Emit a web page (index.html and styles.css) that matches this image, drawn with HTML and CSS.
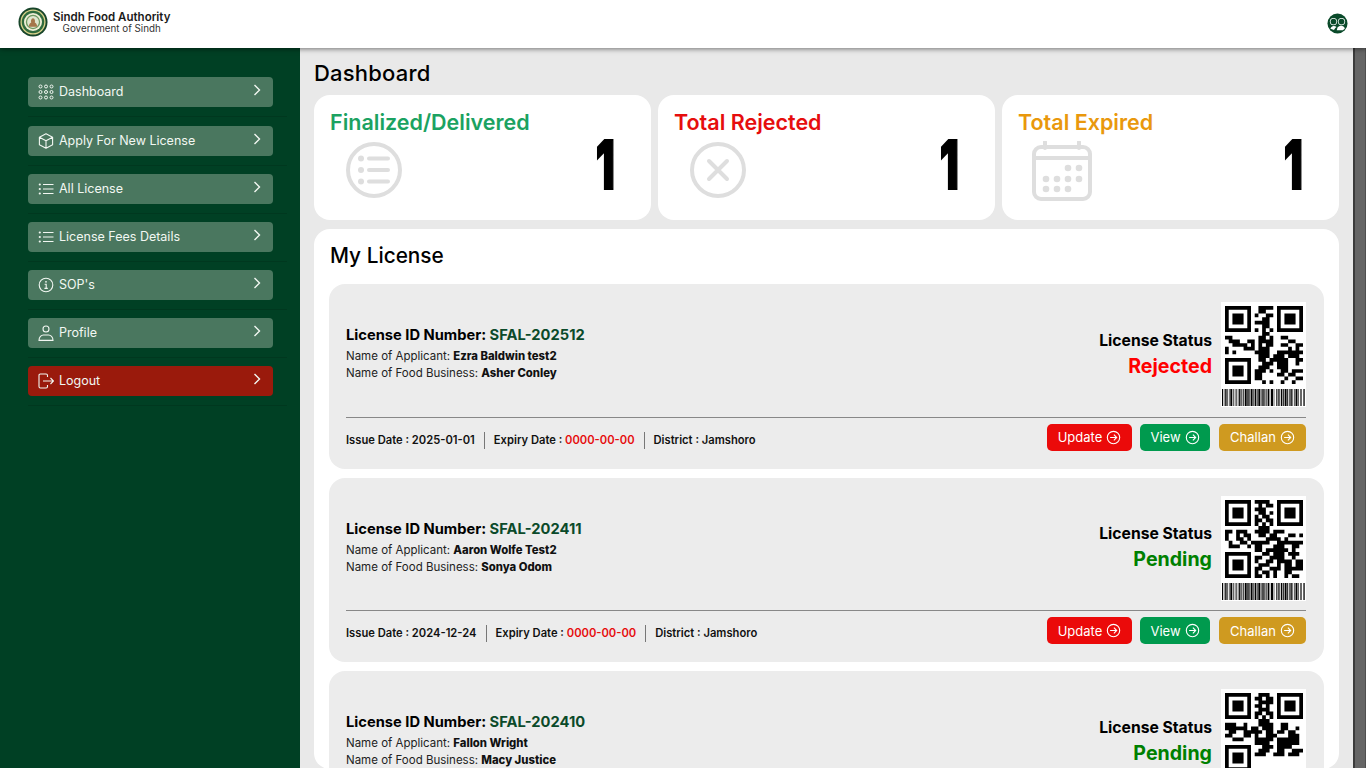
FILE: index.html
```html
<!DOCTYPE html>
<html lang="en">
<head>
<meta charset="utf-8">
<title>Sindh Food Authority</title>
<link rel="stylesheet" href="styles.css">
</head>
<body>
<svg class="sprite" aria-hidden="true">
  <symbol id="chev" viewBox="0 0 8 12"><path d="M1.5 1l5 5-5 5" fill="none" stroke="currentColor" stroke-width="1.4"/></symbol>
  <symbol id="go" viewBox="0 0 16 16"><g fill="none" stroke="currentColor" stroke-width="1.2"><circle cx="8" cy="8" r="6.6"/><path d="M4.4 8h7M8.4 5l3 3-3 3"/></g></symbol>
  <symbol id="list" viewBox="0 0 16 16"><g fill="none" stroke="currentColor" stroke-width="1.1"><path d="M5 3.5h10.5M5 8h10.5M5 12.5h10.5"/></g><g fill="currentColor"><circle cx="1.8" cy="3.5" r="1.1"/><circle cx="1.8" cy="8" r="1.1"/><circle cx="1.8" cy="12.5" r="1.1"/></g></symbol>
  <symbol id="bars" viewBox="0 0 83 17"><path d="M0 8.5h83" fill="none" stroke="#000" stroke-width="17" stroke-dasharray="1 .8 .6 .8 1.4 .7 .6 1 .6 .8 2 .7 .6 1.2 .6 .8 .6 1 .6 .7 1.4 .8 .6 .8 1 1 2 .6 1.4 .6 .6 .7 2 .6 .6 .8 1.4 .6 1 .7 2 .6 .6 .8 1.4 .7 1 .6 .6 1 1.4 .6 .6 .8 2 .7 .6 2 .8 .6 1 .7 .6 .8 1.4 .6 1 .8 2 .6"/></symbol>
  <symbol id="finders" viewBox="0 0 21 21"><path fill-rule="evenodd" d="M0 0h7v7H0zM1 1v5h5V1zM2 2h3v3H2zM14 0h7v7h-7zM15 1v5h5V1zM16 2h3v3h-3zM0 14h7v7H0zM1 15v5h5v-5zM2 16h3v3H2z"/></symbol>
</svg>

<header class="topbar">
  <div class="brand">
    <svg class="logo" viewBox="0 0 32 32" aria-hidden="true">
      <circle cx="16" cy="16" r="15.5" fill="#17452a"/>
      <circle cx="16" cy="16" r="13.4" fill="#d9d28a"/>
      <circle cx="16" cy="16" r="12" fill="#2f6b3d"/>
      <circle cx="16" cy="16" r="9.6" fill="#f1efd8"/>
      <circle cx="16" cy="16" r="7" fill="#dfe6cf" stroke="#6f9a63" stroke-width="1.4"/>
      <path d="M11.5 21c.3-3 1.4-4 2.6-4.6-.6-1.5-.2-4 1.9-4.4 2.1.4 2.5 2.9 1.9 4.4 1.2.6 2.3 1.6 2.6 4.6z" fill="#a5764a"/>
    </svg>
    <div class="brand-text">
      <div class="brand-name">Sindh Food Authority</div>
      <div class="brand-sub">Government of Sindh</div>
    </div>
  </div>
  <svg class="user-icon" viewBox="0 0 22 22" aria-hidden="true">
    <circle cx="11" cy="11" r="10.5" fill="#0a4a2a"/>
    <circle cx="6.800" cy="9" r="3.800" fill="#fff"/>
    <circle cx="15.200" cy="9" r="3.800" fill="#fff"/>
    <circle cx="6.800" cy="9" r="3" fill="#0a4a2a"/>
    <circle cx="15.200" cy="9" r="3" fill="#0a4a2a"/>
    <path d="M3.600 16.500c.6-2 2-3 3.400-3 1.200 0 2.200.4 3 1.200-1 .8-2 1.600-2.600 3.200z" fill="#fff"/>
    <path d="M11 15.200c1-1.200 2.400-1.800 4-1.800 1.700 0 3 .9 3.700 2.800l-2 2H10.200z" fill="#fff"/>
  </svg>
</header>

<div class="shell">
  <aside class="sidebar">
    <ul class="nav">
      <li class="nav-item first"><a class="nav-link">
        <svg class="nav-icon" viewBox="0 0 16 16"><g fill="none" stroke="currentColor" stroke-width="1"><circle cx="2.5" cy="2.500" r="1.500"/><circle cx="8" cy="2.500" r="1.500"/><circle cx="13.500" cy="2.500" r="1.500"/><circle cx="2.500" cy="8" r="1.500"/><circle cx="8" cy="8" r="1.500"/><circle cx="13.500" cy="8" r="1.500"/><circle cx="2.500" cy="13.500" r="1.500"/><circle cx="8" cy="13.500" r="1.500"/><circle cx="13.500" cy="13.500" r="1.500"/></g></svg>
        <span class="nav-label">Dashboard</span><svg class="nav-chev"><use href="#chev"/></svg></a></li>
      <li class="nav-item"><a class="nav-link">
        <svg class="nav-icon" viewBox="0 0 16 16"><path d="M8 .8l6.600 3.400v7.600L8 15.200l-6.600-3.400V4.200zM1.400 4.200L8 7.800l6.600-3.600M8 7.800v7.400" fill="none" stroke="currentColor" stroke-width="1.100" stroke-linejoin="round"/></svg>
        <span class="nav-label">Apply For New License</span><svg class="nav-chev"><use href="#chev"/></svg></a></li>
      <li class="nav-item"><a class="nav-link">
        <svg class="nav-icon"><use href="#list"/></svg>
        <span class="nav-label">All License</span><svg class="nav-chev"><use href="#chev"/></svg></a></li>
      <li class="nav-item"><a class="nav-link">
        <svg class="nav-icon"><use href="#list"/></svg>
        <span class="nav-label">License Fees Details</span><svg class="nav-chev"><use href="#chev"/></svg></a></li>
      <li class="nav-item"><a class="nav-link">
        <svg class="nav-icon" viewBox="0 0 16 16"><circle cx="8" cy="8" r="6.800" fill="none" stroke="currentColor" stroke-width="1.100"/><path d="M6.600 7.200H8.200v4M6.400 11.400h3.400" fill="none" stroke="currentColor" stroke-width="1.100"/><circle cx="8" cy="4.800" r=".9" fill="currentColor"/></svg>
        <span class="nav-label">SOP's</span><svg class="nav-chev"><use href="#chev"/></svg></a></li>
      <li class="nav-item"><a class="nav-link">
        <svg class="nav-icon" viewBox="0 0 16 16"><circle cx="8" cy="4" r="3" fill="none" stroke="currentColor" stroke-width="1.100"/><path d="M1 15.400c0-3.600 2.400-5.400 4.400-5.400h5.200c2 0 4.400 1.800 4.400 5.400z" fill="none" stroke="currentColor" stroke-width="1.100"/></svg>
        <span class="nav-label">Profile</span><svg class="nav-chev"><use href="#chev"/></svg></a></li>
      <li class="nav-item"><a class="nav-link logout">
        <svg class="nav-icon" viewBox="0 0 16 16"><path d="M9.500 4V2.400c0-.8-.5-1.400-1.400-1.400H2.400C1.500 1 1 1.600 1 2.400v11.200c0 .8.500 1.400 1.400 1.400h5.700c.9 0 1.400-.6 1.400-1.400V12M5 8h10.500M12.500 5l3 3-3 3" fill="none" stroke="currentColor" stroke-width="1.100"/></svg>
        <span class="nav-label">Logout</span><svg class="nav-chev"><use href="#chev"/></svg></a></li>
    </ul>
  </aside>

  <main class="content">
    <h1 class="page-title">Dashboard</h1>
    <section class="stats">
      <article class="stat">
        <h2 class="stat-title green">Finalized/Delivered</h2>
        <div class="stat-row">
          <svg class="stat-icon" viewBox="0 0 56 56"><circle cx="28" cy="28" r="26" fill="none" stroke="#dedede" stroke-width="4"/><path d="M23 16.500h19M23 28h19M23 39.500h19" fill="none" stroke="#dedede" stroke-width="4" stroke-linecap="round"/><circle cx="15" cy="16.500" r="3" fill="#dedede"/><circle cx="15" cy="28" r="3" fill="#dedede"/><circle cx="15" cy="39.500" r="3" fill="#dedede"/></svg>
          <span class="stat-num">1</span>
        </div>
      </article>
      <article class="stat">
        <h2 class="stat-title red">Total Rejected</h2>
        <div class="stat-row">
          <svg class="stat-icon" viewBox="0 0 56 56"><circle cx="28" cy="28" r="26" fill="none" stroke="#dedede" stroke-width="4"/><path d="M19 19l18 18M37 19L19 37" fill="none" stroke="#dedede" stroke-width="4" stroke-linecap="round"/></svg>
          <span class="stat-num">1</span>
        </div>
      </article>
      <article class="stat">
        <h2 class="stat-title amber">Total Expired</h2>
        <div class="stat-row">
          <svg class="stat-icon cal" viewBox="0 0 60 60"><g fill="none" stroke="#dedede" stroke-width="4"><rect x="2" y="6" width="56" height="52" rx="7"/><path d="M2 17h56"/><path d="M13 1v6M47 1v6" stroke-linecap="round"/></g><g fill="#dedede"><circle cx="36" cy="27" r="3.300"/><circle cx="47" cy="27" r="3.300"/><circle cx="14" cy="38" r="3.300"/><circle cx="25" cy="38" r="3.300"/><circle cx="36" cy="38" r="3.300"/><circle cx="47" cy="38" r="3.300"/><circle cx="14" cy="48" r="3.300"/><circle cx="25" cy="48" r="3.300"/><circle cx="36" cy="48" r="3.300"/></g></svg>
          <span class="stat-num">1</span>
        </div>
      </article>
    </section>

    <section class="panel">
      <h2 class="panel-title">My License</h2>

      <article class="license">
        <div class="license-top">
          <div class="license-info">
            <h3 class="license-id">License ID Number: <span class="id-val">SFAL-202512</span></h3>
            <p class="license-line">Name of Applicant: <b>Ezra Baldwin test2</b></p>
            <p class="license-line">Name of Food Business: <b>Asher Conley</b></p>
          </div>
          <div class="license-status">
            <div class="status-label">License Status</div>
            <div class="status-val rejected">Rejected</div>
          </div>
          <div class="codes">
            <svg class="qr" viewBox="0 0 21 21"><use href="#finders"/><path fill="none" stroke="#000" d="M9 .5h4M9 1.500h2M8 2.500h1M11 2.500h2M10 3.500h2M8 4.500h4M10 5.500h2M8 6.500h1M10 6.500h1M12 6.500h1M10 7.500h2M0 8.500h2M9 8.500h2M12 8.500h1M15 8.500h2M1 9.500h3M6 9.500h2M9 9.500h4M17 9.500h2M2 10.500h4M7 10.500h1M9 10.500h1M11 10.500h2M15 10.500h2M19 10.500h2M0 11.500h1M5 11.500h3M9 11.500h3M17 11.500h1M19 11.500h1M0 12.500h1M2 12.500h1M8 12.500h4M14 12.500h3M17 12.500h4M9 13.500h3M13 13.500h3M17 13.500h3M9 14.500h2M12 14.500h5M19 14.500h2M10 15.500h3M14 15.500h3M19 15.500h1M9 16.500h3M14 16.500h3M8 17.500h3M12 17.500h1M15 17.500h2M18 17.500h3M8 18.500h2M14 18.500h2M17 18.500h2M8 19.500h2M16 19.500h1M19 19.500h2M10 20.500h1M12 20.500h1M15 20.500h1M18 20.500h1"/></svg>
            <svg class="barcode"><use href="#bars"/></svg>
          </div>
        </div>
        <div class="license-foot">
          <div class="meta"><span class="meta-cell">Issue Date : 2025-01-01</span><span class="meta-cell">Expiry Date : <em>0000-00-00</em></span><span class="meta-cell">District : Jamshoro</span></div>
          <div class="actions">
            <a class="btn btn-red">Update <svg class="btn-icon"><use href="#go"/></svg></a>
            <a class="btn btn-green">View <svg class="btn-icon"><use href="#go"/></svg></a>
            <a class="btn btn-gold">Challan <svg class="btn-icon"><use href="#go"/></svg></a>
          </div>
        </div>
      </article>

      <article class="license">
        <div class="license-top">
          <div class="license-info">
            <h3 class="license-id">License ID Number: <span class="id-val">SFAL-202411</span></h3>
            <p class="license-line">Name of Applicant: <b>Aaron Wolfe Test2</b></p>
            <p class="license-line">Name of Food Business: <b>Sonya Odom</b></p>
          </div>
          <div class="license-status">
            <div class="status-label">License Status</div>
            <div class="status-val pending">Pending</div>
          </div>
          <div class="codes">
            <svg class="qr" viewBox="0 0 21 21"><use href="#finders"/><path fill="none" stroke="#000" d="M8 .5h4M9 1.500h1M11 1.500h2M8 2.500h3M9 3.500h2M12 3.500h1M8 4.500h1M10 4.500h2M8 5.500h2M11 5.500h2M8 6.500h1M10 6.500h1M12 6.500h1M9 7.500h3M0 8.500h2M3 8.500h3M8 8.500h4M13 8.500h3M0 9.500h1M3 9.500h1M5 9.500h2M9 9.500h2M12 9.500h2M17 9.500h2M20 9.500h1M0 10.500h1M3 10.500h2M6 10.500h1M11 10.500h4M16 10.500h1M1 11.500h1M4 11.500h2M7 11.500h5M14 11.500h7M1 12.500h3M6 12.500h1M8 12.500h2M13 12.500h3M18 12.500h2M8 13.500h2M11 13.500h6M18 13.500h1M10 14.500h2M13 14.500h3M17 14.500h3M8 15.500h2M12 15.500h4M18 15.500h1M8 16.500h1M11 16.500h2M14 16.500h4M19 16.500h2M9 17.500h3M14 17.500h1M16 17.500h2M19 17.500h2M8 18.500h2M12 18.500h3M16 18.500h5M8 19.500h1M10 19.500h2M13 19.500h1M16 19.500h2M8 20.500h2M11 20.500h1M13 20.500h1M16 20.500h1M18 20.500h2"/></svg>
            <svg class="barcode"><use href="#bars"/></svg>
          </div>
        </div>
        <div class="license-foot">
          <div class="meta"><span class="meta-cell">Issue Date : 2024-12-24</span><span class="meta-cell">Expiry Date : <em>0000-00-00</em></span><span class="meta-cell">District : Jamshoro</span></div>
          <div class="actions">
            <a class="btn btn-red">Update <svg class="btn-icon"><use href="#go"/></svg></a>
            <a class="btn btn-green">View <svg class="btn-icon"><use href="#go"/></svg></a>
            <a class="btn btn-gold">Challan <svg class="btn-icon"><use href="#go"/></svg></a>
          </div>
        </div>
      </article>

      <article class="license">
        <div class="license-top">
          <div class="license-info">
            <h3 class="license-id">License ID Number: <span class="id-val">SFAL-202410</span></h3>
            <p class="license-line">Name of Applicant: <b>Fallon Wright</b></p>
            <p class="license-line">Name of Food Business: <b>Macy Justice</b></p>
          </div>
          <div class="license-status">
            <div class="status-label">License Status</div>
            <div class="status-val pending">Pending</div>
          </div>
          <div class="codes">
            <svg class="qr" viewBox="0 0 21 21"><use href="#finders"/><path fill="none" stroke="#000" d="M9 .5h3M8 1.500h2M11 1.500h2M9 2.500h4M8 3.500h2M11 3.500h1M9 4.500h3M8 5.500h2M11 5.500h2M8 6.500h1M10 6.500h1M12 6.500h1M9 7.500h3M0 8.500h3M5 8.500h1M9 8.500h4M15 8.500h2M0 9.500h6M7 9.500h2M10 9.500h3M15 9.500h2M19 9.500h1M1 10.500h2M5 10.500h5M11 10.500h2M14 10.500h2M17 10.500h2M0 11.500h2M5 11.500h2M8 11.500h1M11 11.500h3M17 11.500h3M2 12.500h3M8 12.500h5M14 12.500h4M18 12.500h2M8 13.500h4M14 13.500h6M10 14.500h3M14 14.500h4M9 15.500h3M14 15.500h2M18 15.500h3M8 16.500h3M13 16.500h3M17 16.500h3"/></svg>
            <svg class="barcode"><use href="#bars"/></svg>
          </div>
        </div>
      </article>
    </section>
  </main>
  <div class="scrollbar"></div>
</div>
</body>
</html>
```

FILE: styles.css
```css
* { box-sizing: border-box; }
html, body { margin: 0; height: 100%; overflow: hidden; }
body { font-family: "Inter", "Open Sans", sans-serif; color: #000; background: #e9e9e9; }
.sprite { display: none; }
h1, h2, h3, p { margin: 0; }

.topbar { height: 48px; background: #fff; display: flex; align-items: center; justify-content: space-between; padding: 0 18px 4px 18px; box-shadow: 0 1px 5px rgba(0,0,0,.5); position: relative; z-index: 2; }
.brand { display: flex; align-items: center; gap: 5px; }
.logo { width: 30px; height: 30px; flex: none; margin-bottom: 1px; }
.brand-text { text-align: center; }
.brand-name { font-size: 11.500px; font-weight: 600; line-height: 12px; white-space: nowrap; color: #1a1a1a; }
.brand-sub { font-size: 9.800px; line-height: 11px; color: #333; white-space: nowrap; }
.user-icon { width: 21px; height: 21px; margin-top: 3px; }

.shell { display: flex; height: 720px; }
.sidebar { width: 300px; flex: none; background: #004024; padding: 29px 13px 0 28px; }
.nav { list-style: none; margin: 0; padding: 0; }
.nav-item { padding-bottom: 9px; margin-bottom: 8px; border-bottom: 1px solid rgba(0,0,0,.12); width: 259px; }
.nav-item.first { margin-bottom: 9px; }
.nav-link { display: flex; align-items: center; width: 245px; height: 30px; padding: 0 12px 0 10px; background: #4a775f; border-radius: 4px; color: #f2f7f2; font-size: 12.500px; }
.logout { background: #9a1a0c; }
.nav-icon { width: 16px; height: 16px; flex: none; }
.nav-label { margin: 0 0 2px 5px; flex: 1; white-space: nowrap; }
.nav-chev { width: 8px; height: 12px; flex: none; margin: -5px 0 0; }

.content { flex: 1; min-width: 0; padding: 8px 14px 0; overflow: hidden; }
.scrollbar { width: 13px; flex: none; background: #666; border-left: 2px solid #3c3c3c; border-right: 1px solid #505050; }
.page-title { font-size: 22px; font-weight: 500; line-height: 34px; margin-bottom: 5px; letter-spacing: .2px; }

.stats { display: grid; grid-template-columns: repeat(3, 337px); column-gap: 7px; margin-bottom: 9px; }
.stat { height: 125px; background: #fff; border-radius: 16px; padding: 11px 36px 0 16px; }
.stat-title { font-size: 21.500px; font-weight: 600; line-height: 33px; white-space: nowrap; }
.green { color: #1ba261; }
.red { color: #e60d0d; }
.amber { color: #e9980c; }
.stat-row { display: flex; justify-content: space-between; align-items: flex-start; }
.stat-icon { width: 56px; height: 56px; margin: 3px 0 0 16px; }
.stat-icon.cal { width: 60px; height: 60px; margin: 2px 0 0 14px; }
.stat-num { display: block; font-size: 68px; font-weight: 900; line-height: 52px; margin-top: -1px; transform: scaleX(.62); transform-origin: 100% 50%; -webkit-text-stroke: 2px #000; }

.panel { background: #fff; border-radius: 16px; padding: 10px 15px 0; height: 540px; }
.panel-title { font-size: 20.800px; font-weight: 500; line-height: 34px; margin: 0 0 11.200px 1px; }
.license { background: #ececec; border-radius: 16px; padding: 17.500px 18px 18px 17px; height: 184.450px; margin-bottom: 9px; }
.license-top { display: flex; align-items: center; gap: 9px; padding-bottom: 9px; border-bottom: 1px solid #888; height: 116.100px; }
.license-info { flex: 1; padding-bottom: 2px; }
.license-id { font-size: 14.700px; font-weight: 700; line-height: 20px; margin-bottom: 3px; }
.id-val { color: #0b4a2a; }
.license-line { font-size: 11.500px; line-height: 17px; color: #222; }
.license-line b { font-size: 11.300px; font-weight: 800; color: #111; }
.license-status { text-align: right; }
.status-label { font-size: 15.700px; font-weight: 700; line-height: 22px; }
.status-val { font-size: 19.600px; font-weight: 700; line-height: 28px; }
.rejected { color: #f00; }
.pending { color: #008000; }
.codes { width: 85px; height: 105px; flex: none; background: #fff; display: flex; flex-direction: column; align-items: center; padding-top: 4px; gap: 5px; }
.qr { width: 78px; height: 78px; flex: none; }
.barcode { width: 83px; height: 17px; flex: none; }
.license-foot { display: flex; justify-content: space-between; align-items: center; padding-top: 6px; }
.meta { display: flex; align-items: center; font-size: 11.200px; font-weight: 600; color: #111; }
.meta-cell { padding: 0 9px; line-height: 17px; border-left: 1px solid #777; margin-top: 6px; }
.meta-cell:first-child { padding-left: 0; border-left: 0; }
.meta-cell em { font-style: normal; color: #e60d0d; }
.actions { display: flex; gap: 8px; }
.btn { display: flex; align-items: center; justify-content: center; gap: 4px; height: 27px; border-radius: 5px; color: #fff; font-size: 13px; }
.btn-red { width: 85px; background: #eb0a0a; }
.btn-green { width: 70px; background: #009a4e; }
.btn-gold { width: 87px; background: #cf9a20; margin-left: 1px; }
.btn-icon { width: 15px; height: 15px; flex: none; }
```
